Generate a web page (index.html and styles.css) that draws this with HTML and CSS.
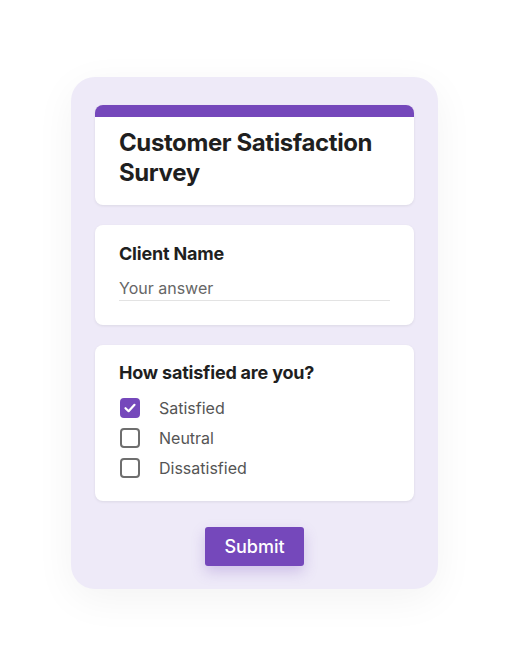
FILE: index.html
```html
<!DOCTYPE html>
<html lang="en">
<head>
  <meta charset="UTF-8">
  <title>Customer Satisfaction Survey</title>
  <link rel="stylesheet" href="styles.css">
</head>
<body>

  <div class="survey">
    <div class="card card-head">
      <h1>Customer Satisfaction Survey</h1>
    </div>

    <div class="card">
      <h2>Client Name</h2>
      <input class="answer" type="text" placeholder="Your answer">
    </div>

    <div class="card card-question">
      <h2>How satisfied are you?</h2>
      <label class="option">
        <span class="box checked">
          <svg width="14" height="14" viewBox="0 0 14 14"><path d="M2.5 7.2 L5.6 10.2 L11.5 3.8" fill="none" stroke="#fff" stroke-width="2.2" stroke-linecap="round" stroke-linejoin="round"/></svg>
        </span>
        Satisfied
      </label>
      <label class="option">
        <span class="box"></span>
        Neutral
      </label>
      <label class="option">
        <span class="box"></span>
        Dissatisfied
      </label>
    </div>

    <div class="actions">
      <button class="submit-btn">Submit</button>
    </div>
  </div>

</body>
</html>
```

FILE: styles.css
```css
body {
  font-family: Inter, "Noto Sans", sans-serif;
  background-color: #fff;
  margin: 0;
  padding: 77px 0 78px;
  color: #1f1f1f;
}

.survey {
  width: 319px;
  margin: 0 auto;
  padding: 28px 24px 23px;
  background-color: #eeeaf8;
  border-radius: 24px;
  box-shadow: 0 10px 40px rgba(0, 0, 0, 0.05);
}

.card {
  background-color: #fff;
  border-radius: 8px;
  padding: 17px 24px 24px;
  margin-bottom: 20px;
  box-shadow: 0 1px 3px rgba(0, 0, 0, 0.08);
}

.card-head {
  border-top: 12px solid #7548bb;
  padding: 11px 24px 17px;
}

h1 {
  margin: 0;
  font-size: 24px;
  line-height: 30px;
  font-weight: 700;
  letter-spacing: -0.4px;
}

h2 {
  margin: 0;
  font-size: 18px;
  line-height: 24px;
  font-weight: 700;
  letter-spacing: -0.2px;
}

.card-question {
  padding-top: 16px;
  padding-bottom: 23px;
}

.answer {
  display: block;
  width: 100%;
  box-sizing: border-box;
  margin-top: 9px;
  padding: 3px 0 2px;
  border: none;
  border-bottom: 1px solid #e3e3e3;
  font-family: inherit;
  font-size: 16px;
  line-height: 20px;
  outline: none;
}

.answer::placeholder {
  color: #666;
}

.option {
  display: flex;
  align-items: center;
  gap: 19px;
  font-size: 16px;
  color: #555;
  margin-top: 10px;
  height: 20px;
}

.option:first-of-type {
  margin-top: 13px;
}

.box {
  width: 20px;
  height: 20px;
  box-sizing: border-box;
  border: 2px solid #6e6e6e;
  border-radius: 4px;
  display: flex;
  align-items: center;
  justify-content: center;
  margin-left: 1px;
}

.box.checked {
  background-color: #7548bb;
  border-color: #7548bb;
}

.actions {
  text-align: center;
  padding-top: 6px;
}

.submit-btn {
  font-family: inherit;
  font-size: 18px;
  font-weight: 500;
  color: #fff;
  background-color: #7548bb;
  border: none;
  border-radius: 3px;
  width: 99px;
  height: 39px;
  cursor: pointer;
  box-shadow: 0 6px 14px rgba(117, 72, 187, 0.25);
}
```
